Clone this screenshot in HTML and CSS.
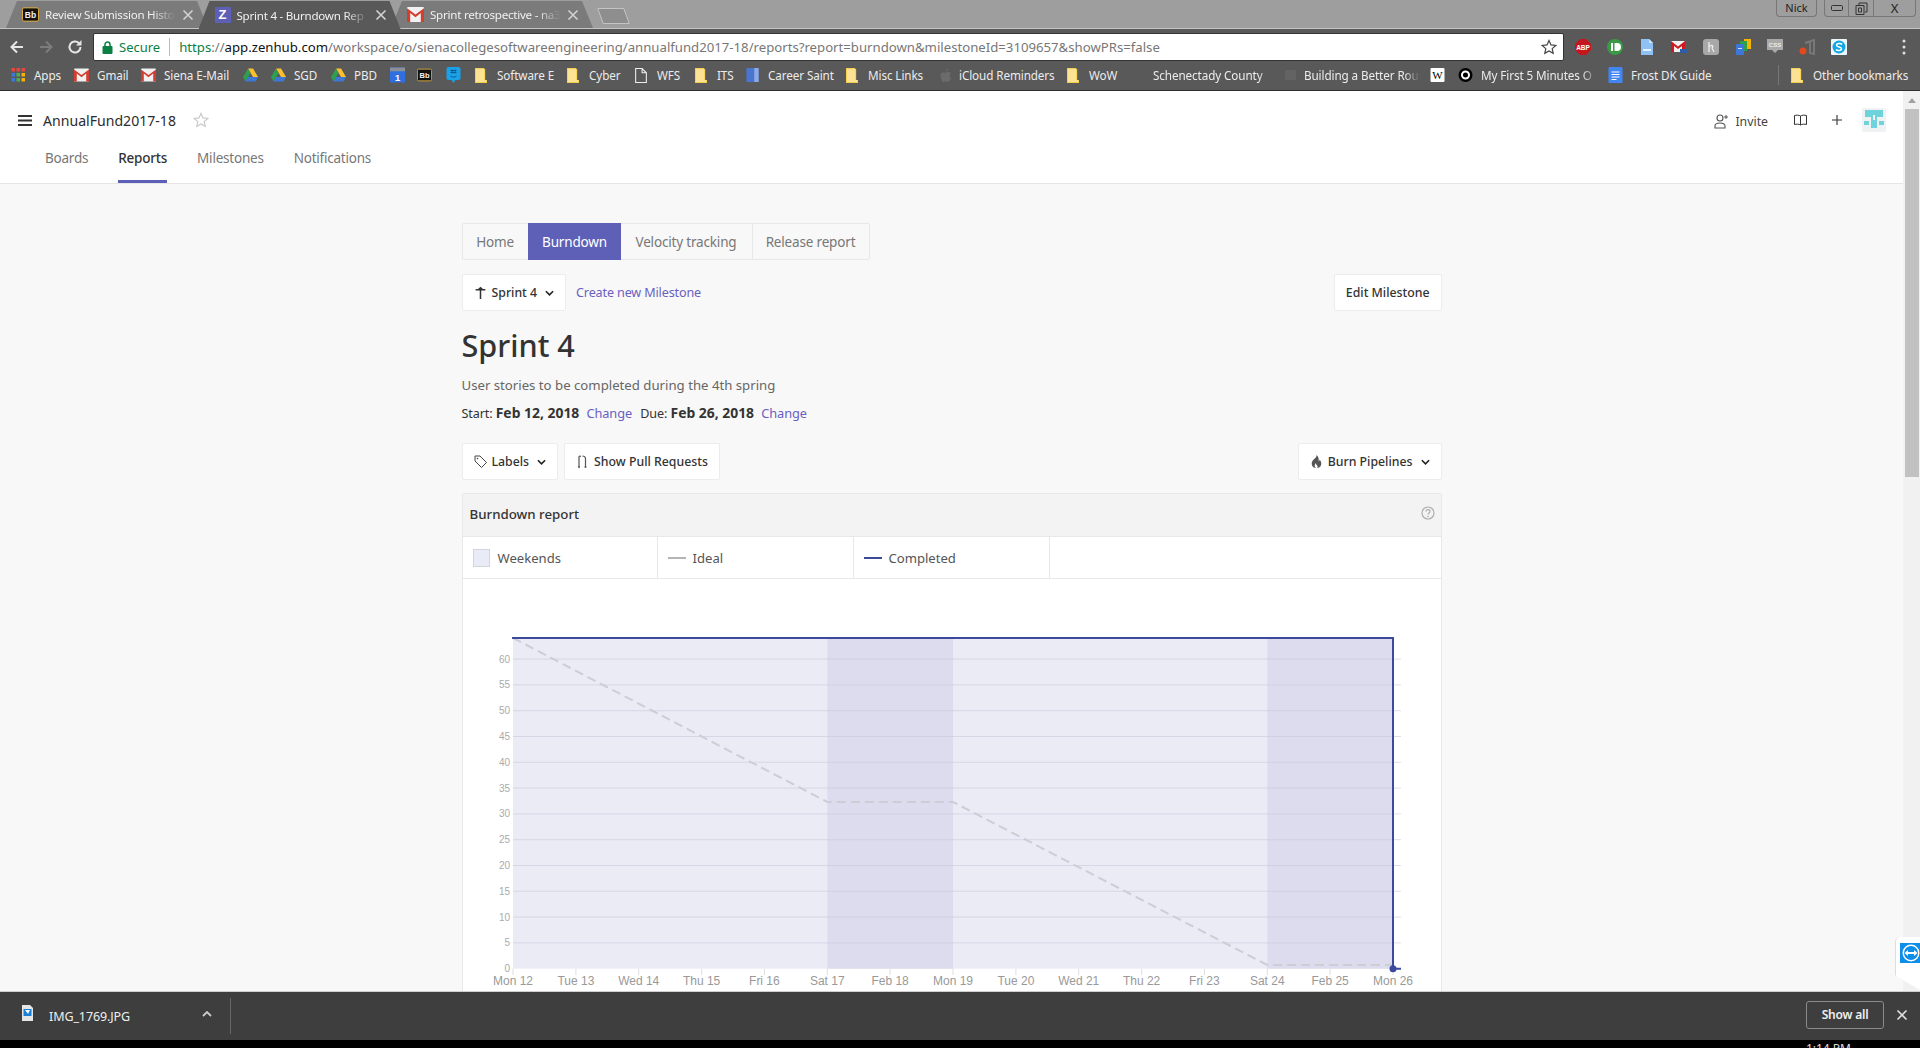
FILE: index.html
```html
<!DOCTYPE html>
<html lang="en">
<head>
<meta charset="utf-8">
<title>Sprint 4 - Burndown Report</title>
<link rel="stylesheet" href="styles.css">
</head>
<body>
<svg class="defs" width="0" height="0" aria-hidden="true">
  <symbol id="i-gmail" viewBox="0 0 16 14"><rect width="16" height="14" rx="1" fill="#f1f1f1"/><path d="M0 1l8 6 8-6v13h-3V5.500L8 9.500 3 5.500V14H0z" fill="#d23f31"/></symbol>
  <symbol id="i-drive" viewBox="0 0 16 14"><path d="M5.300 0h5.400l5.300 9h-5.300z" fill="#fbc02d"/><path d="M5.300 0L0 9l2.700 5 5.300-9z" fill="#2e9e4f"/><path d="M2.700 14h10.600L16 9H5.300z" fill="#3d78d8"/></symbol>
  <symbol id="i-folder" viewBox="0 0 13 16"><path d="M0 0h10v1h1v12h2v3H0z" fill="#f6d04d"/><path d="M1 1h9v12h2v2H1z" fill="#fde293"/></symbol>
  <symbol id="i-bb" viewBox="0 0 18 15"><rect x=".5" y=".5" width="17" height="14" rx="1.500" fill="#111" stroke="#e8b23a"/><text x="9" y="11" text-anchor="middle" class="bb-text">Bb</text></symbol>
  <symbol id="i-chev" viewBox="0 0 10 6"><path d="M1 1l4 4 4-4" fill="none" stroke="#222" stroke-width="1.800"/></symbol>
  <symbol id="i-star" viewBox="0 0 16 16"><path d="M8 1.500l2 4.400 4.800.5-3.600 3.200 1 4.700L8 11.900l-4.200 2.400 1-4.700L1.200 6.400 6 5.900z" fill="none" stroke="currentColor" stroke-width="1.200"/></symbol>
  <symbol id="i-x" viewBox="0 0 12 12"><path d="M1.500 1.500l9 9M10.500 1.500l-9 9" fill="none" stroke="currentColor" stroke-width="1.700"/></symbol>
</svg>

<header class="tabstrip">
  <div class="tab">
    <svg class="fav"><use href="#i-bb"/></svg>
    <span class="tab-title">Review Submission Histo</span>
    <svg class="tab-x"><use href="#i-x"/></svg>
  </div>
  <div class="tab tab-active">
    <span class="fav-z">Z</span>
    <span class="tab-title">Sprint 4 - Burndown Rep</span>
    <svg class="tab-x"><use href="#i-x"/></svg>
  </div>
  <div class="tab">
    <svg class="fav"><use href="#i-gmail"/></svg>
    <span class="tab-title">Sprint retrospective - na3</span>
    <svg class="tab-x"><use href="#i-x"/></svg>
  </div>
  <div class="newtab"></div>
  <div class="winctl">
    <span class="nick">Nick</span>
    <div class="winbtns">
      <span class="winbtn"><svg width="12" height="6" viewBox="0 0 12 6"><rect x=".5" y=".5" width="11" height="5" rx="1" fill="none" stroke="#333"/></svg></span>
      <span class="winbtn"><svg width="13" height="13" viewBox="0 0 13 13"><path d="M4 3V1h8v9h-2M1 3.500h8v9H1zM3.500 6h3v4h-3z" fill="none" stroke="#333"/></svg></span>
      <span class="winbtn winbtn-x">X</span>
    </div>
  </div>
</header>

<div class="toolbar">
  <svg class="nav-ic" viewBox="0 0 16 16"><path d="M14 8H3M8 2.500L2.500 8 8 13.500" fill="none" stroke="#e6e6e6" stroke-width="2"/></svg>
  <svg class="nav-ic" viewBox="0 0 16 16"><path d="M2 8h11M8 2.500L13.500 8 8 13.500" fill="none" stroke="#7c7c7c" stroke-width="2"/></svg>
  <svg class="nav-ic" viewBox="0 0 16 16"><path d="M13.500 8A5.500 5.500 0 1 1 11.800 4" fill="none" stroke="#e6e6e6" stroke-width="2"/><path d="M14.500 1v5.500H9z" fill="#e6e6e6"/></svg>
  <div class="omnibox">
    <svg class="lock" viewBox="0 0 10 13"><path d="M2.500 6V3.500a2.500 2.500 0 0 1 5 0V6" fill="none" stroke="#0b8043" stroke-width="1.500"/><rect y="5" width="10" height="8" rx="1" fill="#0b8043"/></svg>
    <span class="secure">Secure</span>
    <span class="omni-sep"></span>
    <span class="url"><span class="url-s">https</span>://<span class="url-h">app.zenhub.com</span>/workspace/o/sienacollegesoftwareengineering/annualfund2017-18/reports?report=burndown&amp;milestoneId=3109657&amp;showPRs=false</span>
    <svg class="omni-star"><use href="#i-star"/></svg>
  </div>
  <div class="exts">
    <svg class="ext" viewBox="0 0 16 16"><path d="M5 0h6l5 5v6l-5 5H5l-5-5V5z" fill="#c4161c"/><text x="8" y="10.500" text-anchor="middle" class="abp-text">ABP</text></svg>
    <svg class="ext" viewBox="0 0 16 16"><circle cx="8" cy="8" r="8" fill="#3a9a46"/><rect x="4" y="4" width="2" height="8" fill="#fff"/><path d="M7.500 4H10a4 4 0 0 1 0 8H7.500z" fill="#fff"/></svg>
    <svg class="ext" viewBox="0 0 16 16"><path d="M2 0h8l4 4v12H2z" fill="#8fc1f4"/><path d="M10 0l4 4h-4z" fill="#d3e6fb"/><rect x="4" y="10" width="8" height="2" fill="#e5f1fd"/></svg>
    <svg class="ext" viewBox="0 0 16 16"><rect y="2" width="14" height="11" fill="#f1f1f1"/><path d="M0 2l7 5.500L14 2v11h-3V7l-4 3-4-3v6H0z" fill="#d0191f"/><rect x="9" y="10" width="7" height="4" fill="#2f5ea8"/></svg>
    <svg class="ext" viewBox="0 0 16 16"><rect width="16" height="16" rx="3" fill="#a8a8a8"/><path d="M6 3v10M6 8c3-3 5-1 3 1l2 4" fill="none" stroke="#eee" stroke-width="1.300"/></svg>
    <svg class="ext" viewBox="0 0 16 16"><rect x="9" y="0" width="7" height="10" fill="#f4b400"/><rect x="5" y="2" width="7" height="10" fill="#2e9e4f"/><rect x="1" y="5" width="8" height="11" rx="1" fill="#3d78d8"/><rect x="3" y="9" width="4" height="1" fill="#cfe0fa"/></svg>
    <svg class="ext" viewBox="0 0 16 16"><path d="M0 0h16v11h-5l-3 3-3-3H0z" fill="#a9a9a9"/><text x="8" y="7.500" text-anchor="middle" class="css-text">CSS</text></svg>
    <svg class="ext" viewBox="0 0 16 16"><path d="M6 4l9-3v14l-4-1V3" fill="none" stroke="#787878" stroke-width="2"/><circle cx="4" cy="12" r="3.500" fill="#e2491c"/></svg>
    <svg class="ext" viewBox="0 0 16 16"><rect width="16" height="16" rx="1" fill="#ecf7fd"/><circle cx="8" cy="8" r="6.500" fill="#11a7e2"/><path d="M11 5.500C10 4 5.500 4 5.500 6.300c0 2.300 5 1.200 5 3.400C10.500 12 6 12 5 10.500" fill="none" stroke="#fff" stroke-width="1.500"/></svg>
  </div>
  <svg class="kebab" viewBox="0 0 4 16"><circle cx="2" cy="2" r="1.500"/><circle cx="2" cy="8" r="1.500"/><circle cx="2" cy="14" r="1.500"/></svg>
</div>

<nav class="bookmarks">
  <a class="bm"><svg class="bm-ic" viewBox="0 0 14 14"><g><rect width="3.500" height="3.500" fill="#e8453c"/><rect x="5" width="3.500" height="3.500" fill="#e8453c"/><rect x="10" width="3.500" height="3.500" fill="#e8453c"/><rect y="5" width="3.500" height="3.500" fill="#3d78d8"/><rect x="5" y="5" width="3.500" height="3.500" fill="#4caf50"/><rect x="10" y="5" width="3.500" height="3.500" fill="#f4b400"/><rect y="10" width="3.500" height="3.500" fill="#3d78d8"/><rect x="5" y="10" width="3.500" height="3.500" fill="#4caf50"/><rect x="10" y="10" width="3.500" height="3.500" fill="#f4b400"/></g></svg><span>Apps</span></a>
  <a class="bm"><svg class="bm-ic"><use href="#i-gmail"/></svg><span>Gmail</span></a>
  <a class="bm"><svg class="bm-ic"><use href="#i-gmail"/></svg><span>Siena E-Mail</span></a>
  <a class="bm"><svg class="bm-ic"><use href="#i-drive"/></svg></a>
  <a class="bm"><svg class="bm-ic"><use href="#i-drive"/></svg><span>SGD</span></a>
  <a class="bm"><svg class="bm-ic"><use href="#i-drive"/></svg><span>PBD</span></a>
  <a class="bm"><svg class="bm-ic bm-tall" viewBox="0 0 16 16"><rect width="16" height="16" rx="1" fill="#2f6fe0"/><rect width="16" height="4" fill="#8a8f99"/><text x="8" y="14" text-anchor="middle" class="cal-text">1</text></svg></a>
  <a class="bm"><svg class="bm-ic"><use href="#i-bb"/></svg></a>
  <a class="bm"><svg class="bm-ic bm-tall" viewBox="0 0 14 16"><path d="M2 0h10a2 2 0 0 1 2 2v9a2 2 0 0 1-2 2H9l-2 3-2-3H2a2 2 0 0 1-2-2V2a2 2 0 0 1 2-2z" fill="#1aa1e8"/><path d="M4 9c1.500 1.500 4.500 1.500 6 0M5.500 2.500v4M8.500 2.500v4M4 3.500h6M4 5.500h6" fill="none" stroke="#0a5d92" stroke-width="1"/></svg></a>
  <a class="bm"><svg class="bm-ic bm-folder"><use href="#i-folder"/></svg><span>Software E</span></a>
  <a class="bm"><svg class="bm-ic bm-folder"><use href="#i-folder"/></svg><span>Cyber</span></a>
  <a class="bm"><svg class="bm-ic bm-folder" viewBox="0 0 11 14"><path d="M.5.500h6l4 4v9H.5zM6.500.500v4h4" fill="none" stroke="#eee"/></svg><span>WFS</span></a>
  <a class="bm"><svg class="bm-ic bm-folder"><use href="#i-folder"/></svg><span>ITS</span></a>
  <a class="bm"><svg class="bm-ic" viewBox="0 0 14 16"><rect width="14" height="16" fill="#4a75cf"/><rect x="9" width="5" height="16" fill="#8fa9e2"/></svg><span>Career Saint</span></a>
  <a class="bm"><svg class="bm-ic bm-folder"><use href="#i-folder"/></svg><span>Misc Links</span></a>
  <a class="bm"><svg class="bm-ic bm-apple" viewBox="0 0 12 14"><path d="M8 3.500c-2 0-2.500 1-3.500 1S3 3.500 2 4C0 5 0 9 2.500 13c1 1 1.500.5 2.500 0s2 .5 3 .5c1.500 0 3-3 3-4-2-1-2-4 0-5-.7-.6-1.500-1-2.500-1zM6 3c0-1 1-2.500 2.500-3 0 1.500-1 3-2.500 3z" fill="#6b6b6b"/></svg><span>iCloud Reminders</span></a>
  <a class="bm"><svg class="bm-ic bm-folder"><use href="#i-folder"/></svg><span>WoW</span></a>
  <a class="bm bm-fade"><span class="bm-blank"></span><span>Schenectady County</span></a>
  <a class="bm bm-fade"><span class="bm-ghost"></span><span>Building a Better Rou</span></a>
  <a class="bm"><svg class="bm-ic" viewBox="0 0 14 14"><rect width="14" height="14" rx="1" fill="#fff"/><text x="7" y="11" text-anchor="middle" class="wiki-text">W</text></svg></a>
  <a class="bm bm-fade"><svg class="bm-ic" viewBox="0 0 14 14"><circle cx="7" cy="7" r="7" fill="#000"/><circle cx="7" cy="7" r="3.500" fill="none" stroke="#fff" stroke-width="2"/></svg><span>My First 5 Minutes O</span></a>
  <a class="bm"><svg class="bm-ic bm-tall" viewBox="0 0 14 16"><rect width="14" height="16" rx="1" fill="#4285f4"/><path d="M3 5h8M3 7.500h8M3 10h8M3 12.500h5" stroke="#fff"/></svg><span>Frost DK Guide</span></a>
  <span class="bm-sep"></span>
  <a class="bm"><svg class="bm-ic bm-folder"><use href="#i-folder"/></svg><span>Other bookmarks</span></a>
</nav>

<div class="viewport">
  <main class="page">
    <section class="topbar">
      <div class="project-row">
        <svg class="burger" viewBox="0 0 14 11"><path d="M0 1h14M0 5.500h14M0 10h14" stroke="#333" stroke-width="1.800"/></svg>
        <span class="project">AnnualFund2017-18</span>
        <svg class="project-star"><use href="#i-star"/></svg>
        <div class="project-tools">
          <svg class="tool-ic" viewBox="0 0 15 15"><circle cx="6" cy="4" r="3" fill="none" stroke="#555" stroke-width="1.100"/><path d="M1 14v-2c0-2 2-3 5-3s5 1 5 3v2z" fill="none" stroke="#555" stroke-width="1.100"/><path d="M12 1v4M10 3h4" stroke="#555"/></svg>
          <span class="invite">Invite</span>
          <svg class="tool-book" viewBox="0 0 13 12"><path d="M6.500 2C5 1 2.500 1 .5 1.500v9c2-.5 4.500-.5 6 .5 1.500-1 4-1 6-.5v-9C10.500 1 8 1 6.500 2zM6.500 2v9" fill="none" stroke="#333"/></svg>
          <svg class="tool-plus" viewBox="0 0 10 10"><path d="M5 0v10M0 5h10" stroke="#333" stroke-width="1.100"/></svg>
          <svg class="avatar" viewBox="0 0 24 24"><rect width="24" height="24" rx="2" fill="#eef2f3"/><path d="M3 2h18v7H15v11H9V9H3z" fill="#6fd3dc"/><rect x="2" y="13" width="5" height="4" fill="#6fd3dc"/><rect x="17" y="13" width="5" height="4" fill="#6fd3dc"/><rect x="11" y="7" width="2" height="5" fill="#eef2f3"/></svg>
        </div>
      </div>
      <div class="tabs-row">
        <a class="pagetab">Boards</a>
        <a class="pagetab pagetab-on">Reports</a>
        <a class="pagetab">Milestones</a>
        <a class="pagetab">Notifications</a>
      </div>
    </section>

    <section class="content">
      <div class="subnav">
        <a class="subnav-item subnav-home">Home</a>
        <a class="subnav-item subnav-on">Burndown</a>
        <a class="subnav-item subnav-vel">Velocity tracking</a>
        <a class="subnav-item subnav-rel">Release report</a>
      </div>

      <div class="row row-milestone">
        <button class="btn">
          <svg class="btn-ic" viewBox="0 0 12 12"><path d="M6 2v10M1.500 3.500h9" fill="none" stroke="#333" stroke-width="1.400"/><path d="M3.500 3L6 .8 8.500 3z" fill="#333"/></svg>
          <span>Sprint 4</span>
          <svg class="chev"><use href="#i-chev"/></svg>
        </button>
        <a class="link link-new">Create new Milestone</a>
        <button class="btn btn-edit">Edit Milestone</button>
      </div>

      <h1 class="title">Sprint 4</h1>
      <p class="desc">User stories to be completed during the 4th spring</p>
      <p class="dates">Start: <b>Feb 12, 2018</b> <a class="link link-gap">Change</a> <span class="due">Due:</span> <b>Feb 26, 2018</b> <a class="link link-gap">Change</a></p>

      <div class="row row-filters">
        <button class="btn">
          <svg class="btn-ic" viewBox="0 0 13 13"><path d="M1 1h5l6.500 6.500-5 5L1 6z" fill="none" stroke="#444"/><circle cx="3.500" cy="3.500" r=".8" fill="#444"/></svg>
          <span>Labels</span>
          <svg class="chev"><use href="#i-chev"/></svg>
        </button>
        <button class="btn">
          <svg class="btn-ic" viewBox="0 0 11 13"><path d="M2 2v10M8.500 3.500V12M2 2c0-1 1-1 2-.5M8.500 3.500C8.500 2 7 1 5.500 1" fill="none" stroke="#555" stroke-width="1.200"/><circle cx="2" cy="12" r="1" fill="#555"/><circle cx="8.500" cy="12" r="1" fill="#555"/></svg>
          <span>Show Pull Requests</span>
        </button>
        <button class="btn btn-edit">
          <svg class="btn-ic" viewBox="0 0 11 13"><path d="M5.500 0C6 3 2 4 1 7c-1 3 1 6 4 6-1.500-1-2-3 0-5 0 2 1 2 1.500 3 .3.800 0 1.500-.5 2 3 0 5-3 4-6-.3-1-1-2-1.500-2.500 0 1 0 1.500-.8 2C8 4 7.500 1.500 5.500 0z" fill="#555"/></svg>
          <span>Burn Pipelines</span>
          <svg class="chev"><use href="#i-chev"/></svg>
        </button>
      </div>

      <article class="card">
        <header class="card-head">
          <span class="card-title">Burndown report</span>
          <svg class="help" viewBox="0 0 14 14"><circle cx="7" cy="7" r="6" fill="none" stroke="#aaa" stroke-width="1.100"/><path d="M5 5.500C5 3 9 3 9 5.500 9 7 7 7 7 8.500" fill="none" stroke="#aaa" stroke-width="1.100"/><circle cx="7" cy="10.500" r=".8" fill="#aaa"/></svg>
        </header>
        <div class="legend">
          <div class="legend-cell"><span class="swatch"></span>Weekends</div>
          <div class="legend-cell"><span class="dash dash-ideal"></span>Ideal</div>
          <div class="legend-cell"><span class="dash dash-done"></span>Completed</div>
          <div class="legend-cell legend-last"></div>
        </div>
        <svg class="chart" viewBox="463 579 978 500" width="978" height="500">
          <rect x="513" y="638" width="880" height="330.700" fill="#ebebf6"/>
          <rect x="827.300" y="638" width="125.700" height="330.700" fill="#dcdcee"/>
          <rect x="1267.300" y="638" width="125.700" height="330.700" fill="#dcdcee"/>
          <g class="grid">
            <path d="M513 659.100H1401M513 684.900H1401M513 710.700H1401M513 736.500H1401M513 762.300H1401M513 788.100H1401M513 813.900H1401M513 839.700H1401M513 865.500H1401M513 891.300H1401M513 917.100H1401M513 942.900H1401"/>
          </g>
          <path class="ticks" d="M513 968.700V975M575.900 968.700V975M638.700 968.700V975M701.600 968.700V975M764.400 968.700V975M827.300 968.700V975M890.100 968.700V975M953 968.700V975M1015.900 968.700V975M1078.700 968.700V975M1141.600 968.700V975M1204.400 968.700V975M1267.300 968.700V975M1330.100 968.700V975M1393 968.700V975"/>
          <path class="ideal" d="M513 638L827.300 802H953L1267.300 965H1393"/>
          <path class="done" d="M512 638H1393V968.700H1401"/>
          <circle cx="1393" cy="968.700" r="3.500" fill="#3c4a9e"/>
          <g class="ylabels">
            <text x="510" y="662.500">60</text><text x="510" y="688.300">55</text><text x="510" y="714.100">50</text><text x="510" y="739.900">45</text><text x="510" y="765.700">40</text><text x="510" y="791.500">35</text><text x="510" y="817.300">30</text><text x="510" y="843.100">25</text><text x="510" y="868.900">20</text><text x="510" y="894.700">15</text><text x="510" y="920.500">10</text><text x="510" y="946.300">5</text><text x="510" y="972.100">0</text>
          </g>
          <g class="xlabels">
            <text x="513" y="985">Mon 12</text><text x="575.900" y="985">Tue 13</text><text x="638.700" y="985">Wed 14</text><text x="701.600" y="985">Thu 15</text><text x="764.400" y="985">Fri 16</text><text x="827.300" y="985">Sat 17</text><text x="890.100" y="985">Feb 18</text><text x="953" y="985">Mon 19</text><text x="1015.900" y="985">Tue 20</text><text x="1078.700" y="985">Wed 21</text><text x="1141.600" y="985">Thu 22</text><text x="1204.400" y="985">Fri 23</text><text x="1267.300" y="985">Sat 24</text><text x="1330.100" y="985">Feb 25</text><text x="1393" y="985">Mon 26</text>
          </g>
        </svg>
      </article>
    </section>
  </main>

  <aside class="scrollbar">
    <span class="sb-arrow"></span>
    <span class="sb-thumb"></span>
  </aside>

  <div class="teamviewer">
    <svg class="tv-ic" viewBox="0 0 21 20"><rect width="21" height="20" fill="#0e8ee9"/><circle cx="11" cy="10" r="8.500" fill="#fff"/><circle cx="11" cy="10" r="7" fill="#0e8ee9"/><path d="M4.500 10L8 7v2h6V7l3.500 3-3.500 3v-2H8v2z" fill="#fff"/></svg>
  </div>
</div>

<footer class="downloads">
  <svg class="dl-file" viewBox="0 0 11 16"><path d="M0 0h8l3 3v13H0z" fill="#e6e6e6"/><rect x="1.500" y="4" width="8" height="7" fill="#1a7fd8"/><path d="M3 5h5l-2 4z" fill="#fff"/></svg>
  <span class="dl-name">IMG_1769.JPG</span>
  <svg class="dl-caret" viewBox="0 0 10 6"><path d="M1 5l4-4 4 4" fill="none" stroke="#ccc" stroke-width="1.800"/></svg>
  <span class="dl-sep"></span>
  <button class="dl-all">Show all</button>
  <svg class="dl-x"><use href="#i-x"/></svg>
</footer>
<div class="taskbar"><span class="clock">1:14 PM</span></div>
</body>
</html>
```
FILE: styles.css
```css
* { box-sizing: border-box; }
html, body { margin: 0; height: 100%; }
body {
  width: 1920px;
  height: 1048px;
  overflow: hidden;
  display: flex;
  flex-direction: column;
  font-family: "Noto Sans", "Open Sans", sans-serif;
  background: #595959;
  color: #333;
}
.defs { position: absolute; }
.bb-text { font: bold 9px "Liberation Sans", sans-serif; fill: #f1f1f1; }
.abp-text { font: bold 6.500px "Liberation Sans", sans-serif; fill: #fff; }
.css-text { font: bold 6px "Liberation Sans", sans-serif; fill: #eee; }
.cal-text { font: bold 10px "Liberation Sans", sans-serif; fill: #fff; }
.wiki-text { font: 11px "Liberation Serif", serif; fill: #000; }

/* tab strip */
.tabstrip {
  height: 29px;
  flex: none;
  display: flex;
  align-items: flex-end;
  padding-left: 6px;
  background: #9e9e9e;
  border-bottom: 1px solid #c4c4c4;
  position: relative;
}
.tab {
  width: 202px;
  height: 27px;
  margin-right: -9.500px;
  display: flex;
  align-items: center;
  padding: 0 14px 0 16px;
  background: #7b7b7b;
  clip-path: polygon(0 100%, 11px 0, calc(100% - 11px) 0, 100% 100%);
  color: #f0f0f0;
  font-size: 11.600px;
}
.tab-active { background: #595959; height: 28px; z-index: 1; margin-bottom: -1px; }
.fav { width: 17px; height: 15px; flex: none; }
.fav-z {
  width: 16px; height: 16px; flex: none;
  background: #5e60b8; color: #fff;
  font: bold 13px/16px "Liberation Sans", sans-serif;
  text-align: center;
}
.tab-title {
  flex: 1;
  min-width: 0;
  margin-left: 6px;
  white-space: nowrap;
  overflow: hidden;
  letter-spacing: -.25px;
  -webkit-mask-image: linear-gradient(90deg, #000 82%, transparent);
  mask-image: linear-gradient(90deg, #000 82%, transparent);
}
.tab-x { width: 12px; height: 12px; margin-left: 6px; color: #d0d0d0; flex: none; }
.newtab {
  width: 27px;
  height: 16px;
  margin: 0 0 4px 16.500px;
  background: #8e8e8e;
  border: 1px solid #c4c4c4;
  transform: skewX(20deg);
  border-radius: 1px;
}
.winctl {
  margin-left: auto;
  align-self: flex-start;
  display: flex;
  padding-right: 4px;
  gap: 7px;
  font-size: 11px;
  color: #222;
}
.nick, .winbtns {
  height: 17px;
  border: 1px solid #777;
  border-top: 0;
  border-radius: 0 0 4px 4px;
}
.nick { width: 41px; text-align: center; line-height: 15px; }
.winbtns { display: flex; width: 92px; }
.winbtn {
  width: 25px;
  display: flex;
  align-items: center;
  justify-content: center;
  border-right: 1px solid #777;
}
.winbtn-x { width: 42px; border-right: 0; font-size: 13px; }

/* toolbar */
.toolbar {
  height: 32px;
  flex: none;
  display: flex;
  align-items: center;
  padding: 4px 0 0 9px;
  background: #595959;
}
.nav-ic { width: 16px; height: 16px; margin-right: 13px; flex: none; }
.omnibox {
  width: 1471px;
  height: 28px;
  margin-left: -3px;
  display: flex;
  align-items: center;
  padding: 0 6px 0 7px;
  background: #fff;
  border: 1px solid #333;
  border-radius: 2px;
  font-size: 13.180px;
}
.lock { width: 11px; height: 13px; margin-left: 1px; flex: none; }
.secure { margin-left: 6px; color: #0b8043; font-size: 13px; }
.omni-sep { width: 1px; height: 18px; margin: 0 9px; background: #bbb; }
.url { color: #777; white-space: nowrap; flex: 1; }
.url-s { color: #0b8043; }
.url-h { color: #111; }
.omni-star { width: 16px; height: 16px; color: #444; flex: none; }
.exts { display: flex; gap: 16px; margin-left: 11px; }
.ext { width: 16px; height: 16px; flex: none; }
.kebab { width: 4px; height: 16px; margin-left: 55px; fill: #e0e0e0; }

/* bookmarks */
.bookmarks {
  height: 30px;
  flex: none;
  display: grid;
  grid-template-columns: 63px 67px 102px 28px 60px 59px 27px 29px 29px 92px 68px 60px 50px 101px 94px 127px 68px 150px 145px 28px 150px 170px 13px 1fr;
  align-items: center;
  padding: 0 0 1px 11px;
  background: #595959;
  border-bottom: 1px solid #2f2f2f;
  color: #ececec;
  font-size: 11.700px;
  letter-spacing: -.1px;
}
.bm { display: flex; align-items: center; gap: 8px; min-width: 0; overflow: hidden; white-space: nowrap; }
.bm-ic { width: 15px; height: 14px; flex: none; }
.bm-tall { height: 16px; }
.bm-folder { width: 12px; height: 15px; margin-right: 2px; }
.bm-apple { width: 12px; height: 15px; margin-right: -1px; }
.bm-blank { width: 10px; flex: none; }
.bm-ghost { width: 11px; height: 10px; flex: none; background: #636363; }
.bm-fade {
  margin-right: 6px;
  -webkit-mask-image: linear-gradient(90deg, #000 86%, transparent 97%);
  mask-image: linear-gradient(90deg, #000 86%, transparent 97%);
}
.bm-sep { width: 1px; height: 20px; background: #777; }

/* page */
.viewport { flex: 1; min-height: 0; display: flex; position: relative; overflow: hidden; background: #f8f8f8; }
.page { flex: 1; min-width: 0; }
.topbar { height: 93px; background: #fff; border-bottom: 1px solid #e6e6e6; }
.project-row { height: 46px; display: flex; align-items: center; padding: 12px 0 0 18px; }
.burger { width: 14px; height: 11px; }
.project { margin-left: 11px; font-size: 14.100px; color: #2c2c2c; }
.project-star { width: 16px; height: 16px; margin-left: 17px; color: #c9c9c9; }
.project-tools { margin-left: auto; display: flex; align-items: center; padding-right: 17px; }
.tool-ic { width: 15px; height: 15px; margin-top: 2px; }
.invite { margin: 2px 0 0 6px; font-size: 12.300px; color: #444; }
.tool-book { width: 13px; height: 12px; margin-left: 26px; }
.tool-plus { width: 10px; height: 10px; margin-left: 25px; }
.avatar { width: 24px; height: 24px; margin-left: 20px; }
.tabs-row { height: 46px; display: flex; gap: 30px; padding-left: 45px; }
.pagetab { font-size: 13.500px; letter-spacing: -.22px; line-height: 42px; color: #777; height: 46px; }
.pagetab-on { color: #333; font-weight: 500; border-bottom: 3px solid #5e60b8; }

.content { width: 980px; margin: 0 auto; padding-top: 39px; font-size: 14px; }
.subnav { display: flex; height: 37px; }
.subnav-item {
  display: flex;
  align-items: center;
  justify-content: center;
  border: 1px solid #e8e8e8;
  border-right: 0;
  color: #777;
  background: #f8f8f8;
  font-size: 13.500px;
  letter-spacing: -.17px;
}
.subnav-home { width: 66px; border-radius: 2px 0 0 2px; }
.subnav-on { width: 93px; background: #5e60b8; border-color: #5e60b8; color: #fff; }
.subnav-vel { width: 131px; border-left: 0; }
.subnav-rel { width: 118px; border-right: 1px solid #e8e8e8; border-radius: 0 2px 2px 0; }
.row { display: flex; align-items: center; }
.row-milestone { margin-top: 14px; }
.row-filters { margin-top: 20px; gap: 6px; }
.btn {
  height: 37px;
  display: flex;
  align-items: center;
  padding: 0 11px;
  background: #fff;
  border: 1px solid #ececec;
  border-radius: 2px;
  font: 500 12.300px "Noto Sans", sans-serif;
  color: #333;
}
.btn-ic { width: 13px; height: 13px; margin-right: 5px; }
.chev { width: 9px; height: 6px; margin-left: 8px; }
.btn-edit { margin-left: auto; }
.link { color: #6a5fc1; font-size: 12.800px; letter-spacing: -.1px; }
.link-new { margin-left: 10px; font-size: 12.600px; letter-spacing: -.15px; }
.link-gap { margin: 0 5px 0 4px; }
.title { margin: 14px 0 0; font-size: 30.600px; line-height: 40px; font-weight: 500; color: #333; }
.desc { margin: 10px 0 0; line-height: 20px; color: #666; font-size: 13.200px; }
.dates { height: 20px; margin: 8px 0 0; line-height: 20px; font-size: 12.600px; letter-spacing: -.1px; color: #333; }
.dates b { font-weight: 700; font-size: 13.900px; letter-spacing: 0; line-height: 1; }
.card { margin-top: 13px; background: #fff; border: 1px solid #e8e8e8; border-radius: 2px 2px 0 0; }
.card-head {
  height: 43px;
  display: flex;
  align-items: center;
  justify-content: space-between;
  padding: 0 6px 0 7px;
  background: #f3f3f3;
  border-bottom: 1px solid #e8e8e8;
  font-size: 13.300px;
  font-weight: 500;
  color: #333;
}
.card-title { margin-top: -2px; }
.help { width: 14px; height: 14px; margin-top: -4px; }
.legend { height: 42px; display: flex; border-bottom: 1px solid #e8e8e8; }
.legend-cell {
  width: 196px;
  display: flex;
  align-items: center;
  padding-left: 10px;
  border-right: 1px solid #e8e8e8;
  font-size: 13.100px;
  color: #555;
}
.legend-cell:first-child { width: 195px; }
.legend-last { flex: 1; border-right: 0; }
.swatch { width: 17px; height: 18px; margin-right: 8px; background: #e9ebf6; border: 1px solid #d4d4dd; }
.dash { width: 18px; height: 2px; margin-right: 7px; }
.dash-ideal { background: #b4b4b4; }
.dash-done { background: #3c4a9e; }
.chart { display: block; }
.grid path { stroke: #c8c8dc; stroke-opacity: .6; stroke-width: 1; fill: none; }
.ticks { stroke: #dedede; stroke-width: 1; fill: none; }
.ideal { stroke: #cdcdd6; stroke-width: 2; stroke-dasharray: 9 5; fill: none; }
.done { stroke: #3c4a9e; stroke-width: 2; fill: none; }
.ylabels text { font: 10px "Liberation Sans", sans-serif; fill: #aaa; text-anchor: end; }
.xlabels text { font: 12px "Liberation Sans", sans-serif; fill: #999; text-anchor: middle; }

.scrollbar { width: 17px; flex: none; display: flex; flex-direction: column; align-items: center; background: #f1f1f1; }
.sb-arrow {
  width: 0; height: 0; margin-top: 7px;
  border: 4px solid transparent;
  border-top: 0;
  border-bottom: 5px solid #a3a3a3;
}
.sb-thumb { width: 14px; height: 368px; margin-top: 6px; background: #c1c1c1; }
.teamviewer {
  position: absolute;
  right: 0;
  top: 846px;
  width: 25px;
  height: 53px;
  padding: 6px 0 0 4px;
  background: #fff;
  border-left: 1px solid #ddd;
  border-radius: 5px 0 0 0;
  clip-path: polygon(0 0, 100% 0, 100% 100%, 0 72%);
}
.tv-ic { display: block; width: 21px; height: 20px; }

/* downloads */
.downloads {
  height: 49px;
  flex: none;
  display: flex;
  align-items: center;
  background: #3e3e3e;
  border-top: 1px solid #cfcfcf;
  padding-left: 22px;
  color: #eee;
  font-size: 12.500px;
}
.dl-file { width: 11px; height: 16px; margin-top: -6px; }
.dl-name { margin-left: 16px; width: 153px; letter-spacing: -.1px; }
.dl-caret { width: 10px; height: 6px; margin-top: -4px; }
.dl-sep { width: 1px; height: 36px; margin-left: 18px; background: #666; }
.dl-all {
  margin-left: auto;
  width: 78px;
  height: 28px;
  margin-top: -3px;
  background: #3e3e3e;
  border: 1px solid #8a8a8a;
  border-radius: 3px;
  color: #f0f0f0;
  font: 600 12px "Noto Sans", sans-serif;
  letter-spacing: -.2px;
}
.dl-x { margin: -3px 12px 0 12px; width: 12px; height: 12px; color: #ddd; }
.taskbar {
  height: 8px;
  flex: none;
  background: #000;
  overflow: hidden;
  display: flex;
  justify-content: flex-end;
  padding-right: 69px;
}
.clock { font-size: 12px; line-height: 18px; color: #ddd; white-space: nowrap; }
```
